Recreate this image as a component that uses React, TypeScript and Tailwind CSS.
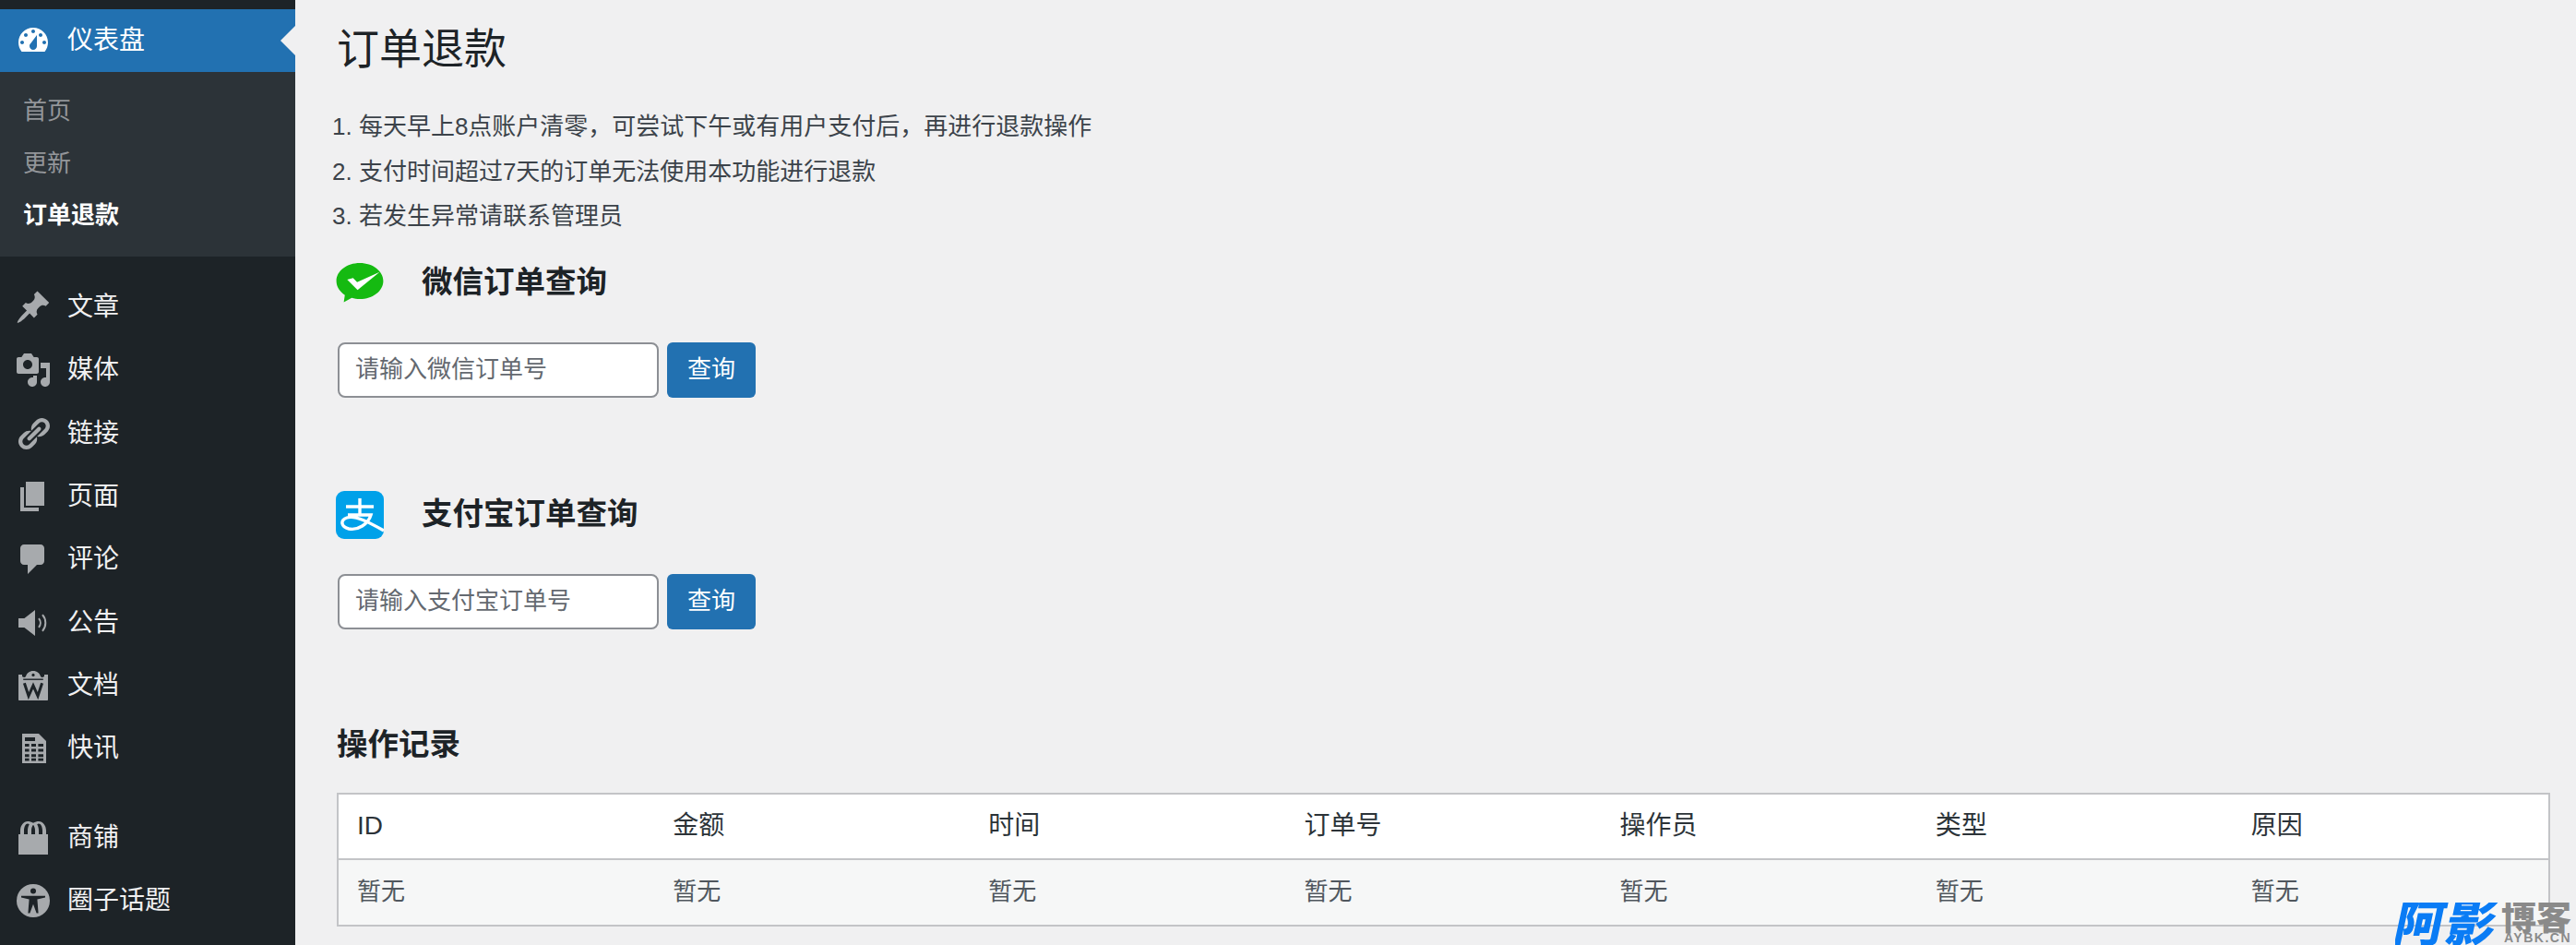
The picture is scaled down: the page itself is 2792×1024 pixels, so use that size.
import type { ReactNode } from 'react'

function Dash({ d }: { d: string }) {
  return (
    <svg viewBox="0 0 20 20" className="h-10 w-10 shrink-0" fill="currentColor">
      <path d={d} fillRule="evenodd" />
    </svg>
  )
}

const dashboardPath =
  'M3.76 16h12.48c1.1-1.37 1.76-3.11 1.76-5 0-4.42-3.58-8-8-8s-8 3.58-8 8c0 1.89.66 3.63 1.76 5zM10 4c.55 0 1 .45 1 1s-.45 1-1 1-1-.45-1-1 .45-1 1-1zM6 6c.55 0 1 .45 1 1s-.45 1-1 1-1-.45-1-1 .45-1 1-1zm8 0c.55 0 1 .45 1 1s-.45 1-1 1-1-.45-1-1 .45-1 1-1zm-5.37 5.55L12 7v6c0 1.1-.9 2-2 2s-2-.9-2-2c0-.57.24-1.08.63-1.45zM4 10c.55 0 1 .45 1 1s-.45 1-1 1-1-.45-1-1 .45-1 1-1zm12 0c.55 0 1 .45 1 1s-.45 1-1 1-1-.45-1-1 .45-1 1-1z'

const VolumeIcon = (
  <svg viewBox="0 0 20 20" className="h-10 w-10 shrink-0" fill="currentColor">
    <path d="M2 7.5h3.2L11 3v14l-5.8-4.5H2z" />
    <path d="M13 7.6c1.2 1.4 1.2 3.4 0 4.8M15 5.6c2.2 2.5 2.2 6.3 0 8.800" fill="none" stroke="currentColor" strokeWidth="1" />
  </svg>
)

const DocsIcon = (
  <svg viewBox="0 0 20 20" className="h-10 w-10 shrink-0" fill="currentColor">
    <path d="M2 4h2v1c1 .6 1.400.6 2 0 .5-1.800 2-3 4-3s3.500 1.200 4 3c.6.6 1 .6 2 0V4h2v13.500c0 .3-.2.500-.5.500h-15c-.3 0-.5-.2-.5-.500z" />
    <circle cx="10" cy="4.200" r=".8" fill="#1d2327" />
    <path d="M4.600 6.600h10.800" stroke="#1d2327" strokeWidth=".7" />
    <path d="M5.200 8.600l2.300 7 2.500-5.600 2.500 5.600 2.300-7" fill="none" stroke="#1d2327" strokeWidth="1.500" />
  </svg>
)

const SheetIcon = (
  <svg viewBox="0 0 20 20" className="h-10 w-10 shrink-0" fill="currentColor">
    <path
      fillRule="evenodd"
      d="M4 2h9l4 4v12H4zM5.500 4v2h5.500V4zM5.500 7.500v1.500h2.300V7.500zM9 7.500v1.500h2.500V7.500zM12.700 7.500v1.500h2.800V7.500zM5.500 10.300v1.500h2.300v-1.500zM9 10.300v1.500h2.500v-1.500zM12.700 10.300v1.500h2.800v-1.500zM5.500 13.100v1.500h2.300v-1.500zM9 13.100v1.500h2.500v-1.500zM12.700 13.100v1.500h2.800v-1.500zM5.500 15.400v1.300h2.300v-1.300zM9 15.400v1.300h2.500v-1.300zM12.700 15.400v1.300h2.800v-1.300z"
    />
  </svg>
)

const StoreIcon = (
  <svg viewBox="0 0 20 20" className="h-10 w-10 shrink-0" fill="currentColor">
    <path
      fillRule="evenodd"
      d="M18 8v11H2V8h1V6c0-2.760 1.800-5 4-5 1 0 2 .3 3 .9 1-.6 2-.9 3-.9 2.200 0 4 2.240 4 5v2zM5 8h2V6c0-1.300.3-2.500.9-3.300C7.600 2.300 7.300 2.200 7 2.200 5.900 2.200 5 3.900 5 6zM9 8h2V6c0-1.300-.4-2.400-1-3.100C9.400 3.600 9 4.700 9 6zM13 8h2V6c0-2.100-.9-3.800-2-3.800-.3 0-.6.100-.9.500.6.800.9 2 .9 3.300z"
    />
  </svg>
)

const AccessIcon = (
  <svg viewBox="0 0 20 20" className="h-10 w-10 shrink-0">
    <circle cx="10" cy="10" r="9" fill="currentColor" />
    <circle cx="10" cy="4.800" r="1.500" fill="#1d2327" />
    <path d="M3.500 7.400h13v.8l-4.300 1.100.6 7.400h-1l-1.800-4.800-1.800 4.800h-1l.6-7.400-4.300-1.100z" fill="#1d2327" />
  </svg>
)

const menu: { label: string; icon: ReactNode }[] = [
  {
    label: '文章',
    icon: <Dash d="M10.440 3.020l1.820-1.820 6.360 6.350-1.830 1.820c-1.050-.68-2.480-.57-3.410.36l-.75.75c-.92.93-1.040 2.350-.35 3.410l-1.830 1.820-2.410-2.410-2.800 2.790c-.42.42-3.380 2.710-3.800 2.290s1.860-3.390 2.280-3.810l2.790-2.790L4.100 9.360l1.830-1.820c1.050.69 2.480.57 3.400-.36l.75-.75c.93-.92 1.050-2.350.36-3.410z" />,
  },
  {
    label: '媒体',
    icon: <Dash d="M13 11V4c0-.55-.45-1-1-1h-1.670L9 1H5L3.670 3H2c-.55 0-1 .45-1 1v7c0 .55.45 1 1 1h10c.55 0 1-.45 1-1zM7 4.500c1.380 0 2.500 1.120 2.500 2.500S8.380 9.500 7 9.500 4.500 8.380 4.500 7 5.620 4.500 7 4.500zM14 6h5v10.500c0 1.380-1.120 2.500-2.500 2.500S14 17.880 14 16.500s1.120-2.500 2.500-2.500c.17 0 .34.020.5.050V9h-3V6zm-4 8.050V13h2v3.500c0 1.380-1.120 2.500-2.500 2.500S7 17.880 7 16.500 8.120 14 9.500 14c.17 0 .34.020.5.050z" />,
  },
  {
    label: '链接',
    icon: <Dash d="M17.740 2.760c1.680 1.690 1.680 4.410 0 6.100l-1.530 1.520c-1.120 1.120-2.700 1.470-4.140 1.090l2.620-2.610.76-.77.76-.76c.84-.84.84-2.200 0-3.040-.84-.85-2.200-.85-3.040 0l-.77.76-3.380 3.380c-.37-1.440-.02-3.020 1.100-4.140l1.520-1.530c1.690-1.680 4.420-1.680 6.100 0zM8.590 13.430l5.340-5.340c.42-.42.42-1.100 0-1.520-.44-.43-1.130-.39-1.530 0l-5.330 5.340c-.42.42-.42 1.100 0 1.520.44.43 1.130.39 1.520 0zm-.76 2.290l4.140-4.150c.38 1.440.03 3.020-1.090 4.140l-1.520 1.530c-1.690 1.680-4.410 1.680-6.100 0-1.680-1.680-1.680-4.420 0-6.100l1.530-1.520c1.120-1.120 2.700-1.470 4.140-1.100l-4.140 4.150c-.85.84-.85 2.200 0 3.050.84.84 2.200.84 3.040 0z" />,
  },
  { label: '页面', icon: <Dash d="M6 15V2h10v13H6zm-1 1h8v2H3V5h2v11z" /> },
  { label: '评论', icon: <Dash d="M5 2h9c1.100 0 2 .9 2 2v7c0 1.100-.9 2-2 2h-2l-5 5v-5H5c-1.100 0-2-.9-2-2V4c0-1.100.9-2 2-2z" /> },
  { label: '公告', icon: VolumeIcon },
  { label: '文档', icon: DocsIcon },
  { label: '快讯', icon: SheetIcon },
]

const menu2 = [
  { label: '商铺', icon: StoreIcon },
  { label: '圈子话题', icon: AccessIcon },
]

function MenuItem({ label, icon }: { label: string; icon: ReactNode }) {
  return (
    <div className="flex h-[68.3px] items-center pl-4 text-[28px] text-[#f0f0f1]">
      <span className="text-[#a7aaad]">{icon}</span>
      <span className="ml-[17px]">{label}</span>
    </div>
  )
}

function Sidebar() {
  return (
    <aside className="flex h-[1024px] w-80 shrink-0 flex-col bg-[#1d2327] pt-[10px]">
      <div className="relative flex h-[68px] items-center bg-[#2271b1] pl-4 text-[28px] text-white">
        <Dash d={dashboardPath} />
        <span className="ml-[17px]">仪表盘</span>
        <div className="absolute right-0 top-[18px] h-0 w-0 border-y-[16px] border-r-[16px] border-y-transparent border-r-[#f0f0f1]" />
      </div>
      <div className="flex h-[200px] flex-col bg-[#2c3338] pl-[25px] pt-[14px] text-[26px] text-[#c3c4c7b3]">
        <div className="flex h-[56px] items-center">首页</div>
        <div className="flex h-[58px] items-center">更新</div>
        <div className="flex h-[54px] items-center font-semibold text-white">订单退款</div>
      </div>
      <div className="mt-[21px]">
        {menu.map(m => (
          <MenuItem key={m.label} {...m} />
        ))}
      </div>
      <div className="mt-7">
        {menu2.map(m => (
          <MenuItem key={m.label} {...m} />
        ))}
      </div>
    </aside>
  )
}

function QueryForm({ placeholder }: { placeholder: string }) {
  return (
    <div className="ml-[2px] flex gap-[9px]">
      <input
        placeholder={placeholder}
        className="h-[60px] w-[348px] rounded-lg border-2 border-[#8c8f94] bg-white px-[17px] text-[26px] outline-none placeholder:text-[#646970]"
      />
      <button className="h-[60px] w-24 rounded-md bg-[#2271b1] text-[26px] text-white">查询</button>
    </div>
  )
}

const WechatLogo = (
  <svg viewBox="0 0 52 44" className="h-[43px] w-[52px]">
    <path
      d="M26 0C11.600 0 0 8.800 0 20c0 6.200 3.600 11.800 9.400 15.500L8.200 43.500l8.800-4.800c2.800.8 5.900 1.300 9 1.300 14.400 0 26-9 26-20S40.400 0 26 0z"
      fill="#15ba11"
    />
    <path d="M12 18.500l6.500-2 4.500 4.800L48 10 23.500 30z" fill="#fff" />
  </svg>
)

const AlipayLogo = (
  <svg viewBox="0 0 52 52" className="h-[52px] w-[52px]">
    <rect width="52" height="52" rx="9" fill="#00a1e9" />
    <path
      d="M11 17h30M26 8v17M13 26h25C35 36 24 43 14 41 6 39 4 32 12 29c9-3 24 5 40 14"
      fill="none"
      stroke="#fff"
      strokeWidth="3.400"
    />
  </svg>
)

const columns = ['ID', '金额', '时间', '订单号', '操作员', '类型', '原因']

export default function App() {
  return (
    <div className="relative flex h-[1024px] w-[2792px] overflow-hidden bg-[#f0f0f1] [font-family:'Liberation_Sans','Noto_Sans_CJK_SC',sans-serif]">
      <Sidebar />
      <main className="flex-1 pl-[44px] pt-[23px]">
        <h1 className="ml-[1px] text-[46px] leading-[60px] text-[#1d2327]">订单退款</h1>
        <div className="-ml-[4px] mt-[30px] text-[26px] leading-[48.5px] text-[#3c434a]">
          <p>1. 每天早上8点账户清零，可尝试下午或有用户支付后，再进行退款操作</p>
          <p>2. 支付时间超过7天的订单无法使用本功能进行退款</p>
          <p>3. 若发生异常请联系管理员</p>
        </div>
        <div className="mt-[18px] flex h-[60px] items-center gap-[41px]">
          {WechatLogo}
          <h2 className="text-[33.500px] font-semibold text-[#1d2327]">微信订单查询</h2>
        </div>
        <div className="mt-[34px]">
          <QueryForm placeholder="请输入微信订单号" />
        </div>
        <div className="mt-[97px] flex h-[60px] items-center gap-[41px]">
          {AlipayLogo}
          <h2 className="text-[33.500px] font-semibold text-[#1d2327]">支付宝订单查询</h2>
        </div>
        <div className="mt-[34px]">
          <QueryForm placeholder="请输入支付宝订单号" />
        </div>
        <h2 className="ml-[1px] mt-[101px] text-[33.500px] font-semibold leading-[48px] text-[#1d2327]">操作记录</h2>
        <table className="ml-[1px] mt-[28px] w-[2399px] table-fixed border-separate border-spacing-0 border-2 border-[#c3c4c7] bg-white">
          <thead>
            <tr>
              {columns.map(c => (
                <th key={c} className="h-[71px] border-b-2 border-[#c3c4c7] pl-5 text-left text-[28px] font-normal text-[#2c3338]">
                  {c}
                </th>
              ))}
            </tr>
          </thead>
          <tbody>
            <tr>
              {columns.map(c => (
                <td key={c} className="h-[70px] bg-[#f6f7f7] pl-5 text-[26px] text-[#50575e]">
                  暂无
                </td>
              ))}
            </tr>
          </tbody>
        </table>
      </main>

      {/* 水印 */}
      <div className="absolute bottom-0 right-[4px] flex h-[46px] w-[192px] items-start overflow-hidden">
        <span className="-skew-x-12 text-[54px] font-black leading-[46px] tracking-[2px] text-[#0a7cf5]">阿影</span>
        <div className="ml-[3px] flex flex-col items-end">
          <span className="text-[38px] font-black leading-[32px] text-[#8a8a8a]">博客</span>
          <span className="text-[14px] font-bold leading-[12px] tracking-[1.500px] text-[#8a8a8a]">AYBK.CN</span>
        </div>
      </div>
    </div>
  )
}
